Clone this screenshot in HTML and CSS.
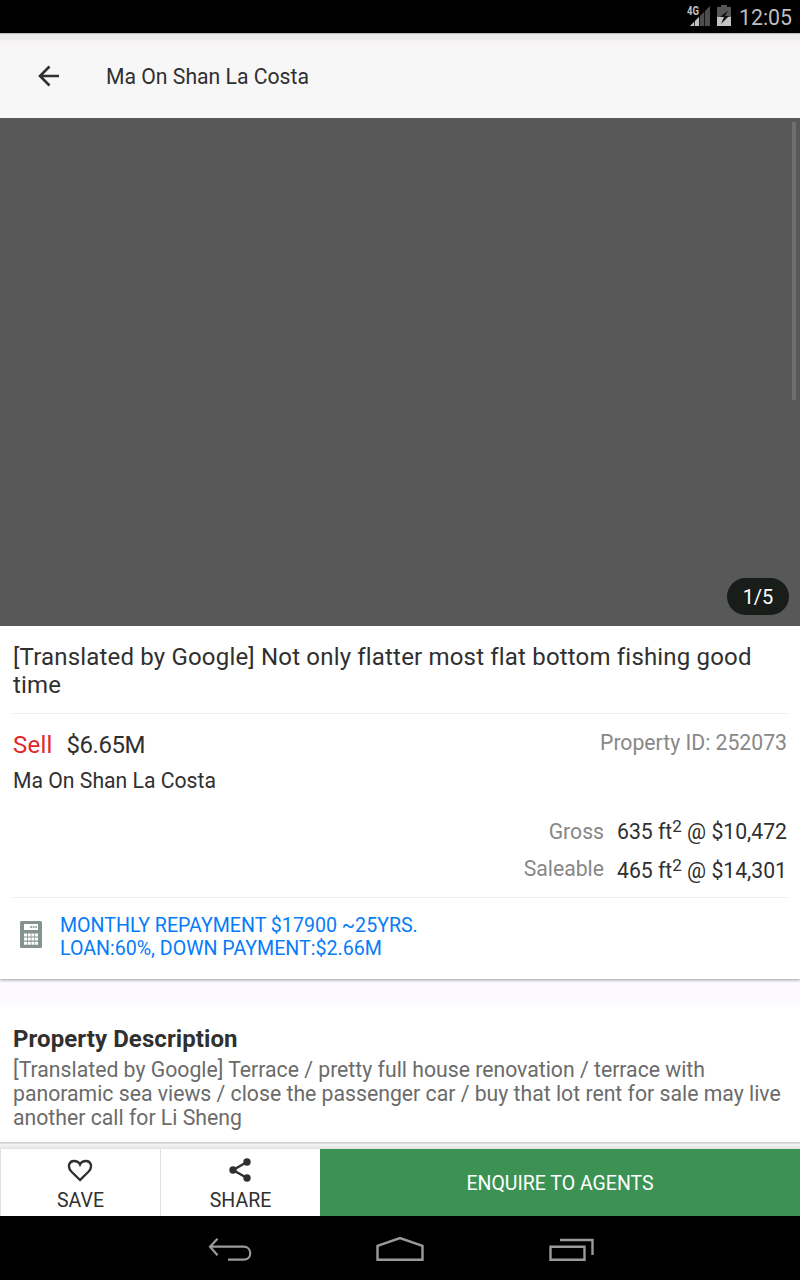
FILE: index.html
```html
<!DOCTYPE html>
<html lang="en">
<head>
<meta charset="utf-8">
<title>Ma On Shan La Costa</title>
<link rel="stylesheet" href="styles.css">
</head>
<body>
<div class="screen">
  <div class="status">
    <svg class="signal" width="24" height="23" viewBox="0 0 24 23">
      <path d="M3 21L23 1V21Z" fill="#4c4e4c"/>
      <path d="M3 21L12 12V21Z" fill="#c4c4c4"/>
      <path d="M7.500 10V22M12.500 0V22M17.500 0V22" stroke="#000" stroke-width=".7"/>
      <text x="0" y="10" class="network" textLength="12" lengthAdjust="spacingAndGlyphs">4G</text>
    </svg>
    <svg class="battery" width="14" height="21" viewBox="0 0 14 21">
      <path d="M4 0h6v2h4v10H0V2h4z" fill="#555755"/>
      <path d="M0 12h14v9H0z" fill="#c4c4c4"/>
      <path d="M11 5.500L3 12h4l-3 7 8-8H8z" fill="#111"/>
    </svg>
    <span class="clock">12:05</span>
  </div>
  <header class="appbar">
    <svg class="back" width="22" height="22" viewBox="0 0 22 22"><path d="M11.500 1.500L2 11l9.500 9.500M2 11H21" fill="none" stroke="#303030" stroke-width="2.600"/></svg>
    <h1 class="appbar-title">Ma On Shan La Costa</h1>
  </header>
  <div class="hero"><i class="scrollbar"></i><span class="counter">1/5</span></div>
  <main class="content">
    <section class="card">
      <h2 class="headline">[Translated by Google] Not only flatter most flat bottom fishing good<br>time</h2>
      <div class="details">
        <div class="price-row">
          <div class="price"><span class="sell">Sell</span><span class="amount">$6.65M</span></div>
          <span class="property-id">Property ID: 252073</span>
        </div>
        <div class="estate">Ma On Shan La Costa</div>
        <div class="area"><span class="area-label">Gross</span><span class="area-value">635 ft<sup>2</sup> @ $10,472</span></div>
        <div class="area saleable"><span class="area-label">Saleable</span><span class="area-value">465 ft<sup>2</sup> @ $14,301</span></div>
      </div>
      <div class="mortgage">
        <svg width="22" height="27" viewBox="0 0 22 27">
          <rect width="22" height="27" rx="1.500" fill="#85928f"/>
          <rect x="4" y="3" width="14" height="6" fill="#fff"/>
          <path d="M10 6h7" stroke="#85928f" stroke-width="1.500" stroke-dasharray="2 .6"/>
          <path d="M4 14h14M4 18h14M4 22.300h14" stroke="#fff" stroke-width="3" stroke-dasharray="3 .7"/>
        </svg>
        <p class="mortgage-text">MONTHLY REPAYMENT $17900 ~25YRS.<br>LOAN:60%, DOWN PAYMENT:$2.66M</p>
      </div>
    </section>
    <section class="description">
      <h3 class="description-title">Property Description</h3>
      <p class="description-text">[Translated by Google] Terrace / pretty full house renovation / terrace with<br>panoramic sea views / close the passenger car / buy that lot rent for sale may live<br>another call for Li Sheng</p>
    </section>
  </main>
  <div class="bottom-shadow"></div>
  <div class="actions">
    <div class="action">
      <svg width="26" height="24" viewBox="0 0 26 24"><path d="M13 22L4.800 14C-.5 8.500 2.500 3 7 3c3 0 5 1.500 6 3.500 1-2 3-3.500 6-3.500 4.500 0 7.500 5.500 2.200 11z" fill="none" stroke="#303030" stroke-width="2.400"/></svg>
      <span class="action-label">SAVE</span>
    </div>
    <div class="action">
      <svg width="26" height="24" viewBox="0 0 26 24"><path d="M20 4L6 12l14 8" fill="none" stroke="#303030" stroke-width="2.400"/><g fill="#303030"><circle cx="20" cy="4" r="3.700"/><circle cx="6" cy="12" r="3.700"/><circle cx="20" cy="20" r="3.700"/></g></svg>
      <span class="action-label">SHARE</span>
    </div>
    <div class="enquire"><span class="enquire-label">ENQUIRE TO AGENTS</span></div>
  </div>
  <nav class="system">
    <svg width="44" height="64" viewBox="0 0 44 64"><path d="M9.500 23L2 31l7.500 8.500M2.500 31H35.500c9 0 9 13 0 13H20" transform="translate(0 -.3)" fill="none" stroke="#999b99" stroke-width="2.200"/></svg>
    <svg width="48" height="64" viewBox="0 0 48 64"><path d="M1.500 43.800V29.800L24 22l22.500 7.800v14z" fill="none" stroke="#999b99" stroke-width="2.400"/></svg>
    <svg width="45" height="64" viewBox="0 0 45 64"><path d="M1.500 30.700h34v13.100h-34zM11 24h32.500v15" fill="none" stroke="#999b99" stroke-width="2.400"/></svg>
  </nav>
</div>
</body>
</html>
```
FILE: styles.css
```css
* { box-sizing: border-box; }
body, h1, h2, h3, p { margin: 0; font-weight: 400; }
body { background: #fff; }
svg { display: block; flex: none; }
.screen { width: 800px; height: 1280px; overflow: hidden; display: flex; flex-direction: column; font-family: Roboto, sans-serif; color: #303030; background: #fff; white-space: nowrap; font-variant-ligatures: none; }
.status { height: 33px; flex: none; background: #000; display: flex; justify-content: flex-end; align-items: flex-start; padding-right: 8px; }
.signal { margin: 5px 6px 0 0; }
.network { font: 700 12px Roboto, sans-serif; fill: #c0c0c0; }
.battery { margin: 5px 8px 0 0; }
.clock { font-size: 21.3px; line-height: 33px; padding-top: 1px; color: #bebebe; }
.appbar { height: 85px; flex: none; display: flex; align-items: center; padding-left: 38px; background: linear-gradient(#bdbdbd 0 1px, #ebe9eb 1px 2px, #efedef 7px, #f7f2f5 7px 9px, #f7f7f7 13px); }
.appbar-title { font-size: 21.2px; line-height: 28px; margin: 3px 0 0 46px; }
.hero { height: 508px; flex: none; background: #585858; position: relative; }
.scrollbar { position: absolute; right: 4px; top: 4px; width: 4px; height: 278px; background: #6f6f6f; }
.counter { position: absolute; right: 11px; bottom: 11px; width: 62px; height: 37px; border-radius: 19px; background: #191d1a; color: #fff; font-size: 20px; line-height: 39px; text-align: center; }
.content { flex: 1; min-height: 0; background: linear-gradient(#fff 353px, #fdfaff 354px 378px, #fff 380px); }
.card { height: 353px; background: #fff; padding: 0 12px; box-shadow: 0 1px 3px #999; }
.headline { height: 88px; border-bottom: 1px solid #efefef; padding: 17px 1px 0; font-size: 24px; line-height: 28px; letter-spacing: .18px; }
.details { height: 184px; border-bottom: 1px solid #efefef; padding: 15px 1px 0; font-size: 21.2px; }
.price-row { display: flex; justify-content: space-between; height: 38px; }
.price { display: flex; gap: 14px; font-size: 24px; line-height: 32px; }
.sell { color: #e12729; letter-spacing: .2px; }
.amount { letter-spacing: -.45px; }
.property-id { color: #888; line-height: 28px; }
.estate { line-height: 28px; height: 49px; }
.area { display: flex; justify-content: flex-end; gap: 13px; height: 39px; line-height: 32px; }
.area-label { color: #888; }
.area-value { width: 170px; }
.saleable .area-label { margin-top: -2px; }
sup { font-size: 17px; line-height: 0; vertical-align: 7px; }
.mortgage { display: flex; gap: 18px; padding: 23px 8px 0; }
.mortgage-text { color: #077cf7; font-size: 19.6px; line-height: 23px; margin-top: -7px; }
.description { padding: 44px 13px 0; }
.description-title { font-size: 24px; font-weight: 700; line-height: 32px; letter-spacing: .08px; }
.description-text { color: #6b6b6b; font-size: 21.23px; line-height: 24px; margin-top: 3px; }
.bottom-shadow { height: 7px; flex: none; background: linear-gradient(#cdcdcd 0 1px, #dedede 1px 2px, #f5f5f5 2px, #e2e2e2); }
.actions { height: 67px; flex: none; display: grid; grid-template-columns: 160px 160px 1fr; background: #fff; }
.action { border-left: 1px solid #e2dfe2; display: flex; flex-direction: column; align-items: center; padding: 9px 2px 0 0; }
.action-label { font-size: 19.5px; line-height: 24px; margin: 7px 0 0 2px; }
.enquire { background: #3b9253; color: #fff; display: flex; justify-content: center; align-items: center; padding-top: 2px; font-size: 19.5px; }
.system { height: 64px; flex: none; background: #000; display: flex; justify-content: center; gap: 124.5px; padding-left: 1px; }
```
